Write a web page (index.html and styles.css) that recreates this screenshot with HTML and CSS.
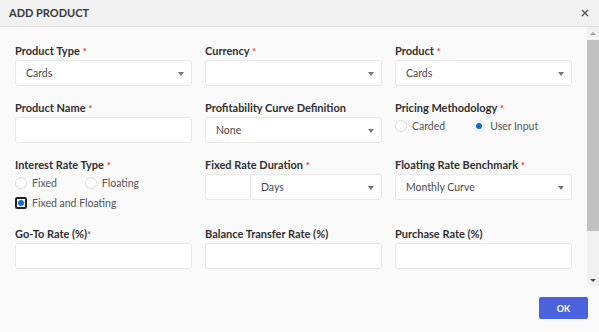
FILE: index.html
```html
<!DOCTYPE html>
<html lang="en">
<head>
  <meta charset="UTF-8">
  <meta name="viewport" content="width=device-width, initial-scale=1.0">
  <title>Add Product</title>
  <link rel="stylesheet" href="styles.css">
</head>
<body>
  <div class="dialog">
    <header class="dialogHeader">
      <span class="dialogTitle">ADD PRODUCT</span>
      <button class="btnClose" type="button" aria-label="Close">
        <svg width="8" height="8" viewBox="0 0 8 8"><path d="M1 1L7 7M7 1L1 7" stroke="#555" stroke-width="1.4" fill="none"/></svg>
      </button>
    </header>

    <div class="dialogBody">
      <form class="formGrid">
        <div class="field">
          <label>Product Type <span class="req">*</span></label>
          <div class="select">Cards</div>
        </div>
        <div class="field">
          <label>Currency <span class="req">*</span></label>
          <div class="select"></div>
        </div>
        <div class="field">
          <label>Product <span class="req">*</span></label>
          <div class="select">Cards</div>
        </div>

        <div class="field">
          <label>Product Name <span class="req">*</span></label>
          <input class="textInput" type="text">
        </div>
        <div class="field">
          <label>Profitability Curve Definition</label>
          <div class="select">None</div>
        </div>
        <div class="field">
          <label>Pricing Methodology <span class="req">*</span></label>
          <div class="radioRow">
            <span class="radio"><i class="dot"></i>Carded</span>
            <span class="radio checked"><i class="dot"></i>User Input</span>
          </div>
        </div>

        <div class="field">
          <label>Interest Rate Type <span class="req">*</span></label>
          <div class="radioRow">
            <span class="radio"><i class="dot"></i>Fixed</span>
            <span class="radio"><i class="dot"></i>Floating</span>
          </div>
          <div class="radioRow second">
            <span class="radio checked focused"><i class="dot"></i>Fixed and Floating</span>
          </div>
        </div>
        <div class="field">
          <label>Fixed Rate Duration <span class="req">*</span></label>
          <div class="splitControl">
            <input class="textInput short" type="text">
            <div class="select grow">Days</div>
          </div>
        </div>
        <div class="field">
          <label>Floating Rate Benchmark <span class="req">*</span></label>
          <div class="select">Monthly Curve</div>
        </div>

        <div class="field">
          <label>Go-To Rate (%)<span class="req">*</span></label>
          <input class="textInput" type="text">
        </div>
        <div class="field">
          <label>Balance Transfer Rate (%)</label>
          <input class="textInput" type="text">
        </div>
        <div class="field">
          <label>Purchase Rate (%)</label>
          <input class="textInput" type="text">
        </div>
      </form>

      <div class="scrollbar">
        <span class="arrowUp"></span>
        <div class="track">
          <div class="thumb"></div>
        </div>
        <span class="arrowDown"></span>
      </div>
    </div>

    <footer class="dialogFooter">
      <button class="btnOk" type="button">OK</button>
    </footer>
  </div>
</body>
</html>
```

FILE: styles.css
```css
body {
  margin: 0;
  font-family: Lato, "Noto Sans", sans-serif;
  color: #333;
  background: #fafafa;
}
.dialog {
  display: flex;
  flex-direction: column;
  height: 332px;
  background: #fafafa;
}
.dialogHeader {
  display: flex;
  align-items: center;
  justify-content: space-between;
  height: 26px;
  padding: 0 8px 0 9px;
  background: #f1f1f1;
  border-bottom: 1px solid #dedede;
}
.dialogTitle {
  font-size: 11px;
  font-weight: 700;
  color: #383838;
  line-height: 14px;
}
.btnClose {
  border: 0;
  background: none;
  padding: 0;
  width: 8px;
  height: 8px;
  margin-right: 2px;
  display: flex;
}
.dialogBody {
  display: flex;
  height: 259px;
}
.formGrid {
  flex: 1;
  display: grid;
  grid-template-columns: repeat(3, 177px);
  column-gap: 13px;
  row-gap: 14px;
  align-content: start;
  align-items: start;
  padding: 16px 15px 0;
  margin: 0;
  overflow: hidden;
}
.field label {
  display: block;
  height: 16px;
  line-height: 16px;
  margin-bottom: 1px;
  font-size: 11px;
  font-weight: 700;
  color: #303030;
  white-space: nowrap;
}
.req {
  color: #ec3b44;
  font-size: 10px;
}
.select,
.textInput {
  box-sizing: border-box;
  height: 26px;
  width: 100%;
  background: #fff;
  border: 1px solid #e9e9e9;
  border-radius: 3px;
  font-family: inherit;
  font-size: 10.5px;
  color: #4a4a4a;
}
.select {
  position: relative;
  display: flex;
  align-items: center;
  padding: 0 20px 0 10px;
}
.select::after {
  content: "";
  position: absolute;
  right: 7px;
  top: 11px;
  border-left: 3px solid transparent;
  border-right: 3px solid transparent;
  border-top: 4px solid #777;
}
.textInput {
  display: block;
  padding: 0 8px;
  outline: none;
}
.splitControl {
  display: flex;
}
.textInput.short {
  width: 45px;
  flex: none;
  border-radius: 3px 0 0 3px;
  border-right: 0;
}
.select.grow {
  flex: 1;
  border-radius: 0 3px 3px 0;
}
.radioRow {
  display: flex;
  align-items: center;
  height: 18px;
  gap: 28px;
}
.radioRow.second {
  margin-top: 2px;
}
.radio {
  display: flex;
  align-items: center;
  gap: 5px;
  font-size: 10.5px;
  color: #555;
}
.radio .dot {
  box-sizing: border-box;
  width: 12px;
  height: 12px;
  border-radius: 50%;
  background: #fff;
  border: 1px solid #dcdcdc;
  display: flex;
  align-items: center;
  justify-content: center;
}
.radio.checked .dot::after {
  content: "";
  width: 6px;
  height: 6px;
  border-radius: 50%;
  background: #0a6ed1;
}
.radio.checked .dot {
  border-color: #e6e6e6;
}
.radio.focused .dot {
  border-radius: 2px;
  border: 2px solid #222;
}
.scrollbar {
  display: flex;
  flex-direction: column;
  align-items: center;
  width: 12px;
  background: #f1f1f1;
}
.arrowUp,
.arrowDown {
  flex: none;
  height: 12px;
  display: flex;
  align-items: center;
  justify-content: center;
}
.arrowUp::after {
  content: "";
  border-left: 3px solid transparent;
  border-right: 3px solid transparent;
  border-bottom: 3px solid #a3a3a3;
}
.arrowDown::after {
  content: "";
  border-left: 3px solid transparent;
  border-right: 3px solid transparent;
  border-top: 3px solid #505050;
}
.track {
  flex: 1;
  width: 100%;
}
.thumb {
  height: 191px;
  margin-top: 1px;
  background: #c1c1c1;
}
.dialogFooter {
  flex: 1;
  display: flex;
  justify-content: flex-end;
  align-items: flex-start;
  padding: 11px 11px 0 0;
}
.btnOk {
  width: 49px;
  height: 22px;
  border: 0;
  border-radius: 2px;
  background: #4b62de;
  color: #fff;
  font-family: inherit;
  font-size: 9px;
  font-weight: 700;
  padding: 0;
}
```
